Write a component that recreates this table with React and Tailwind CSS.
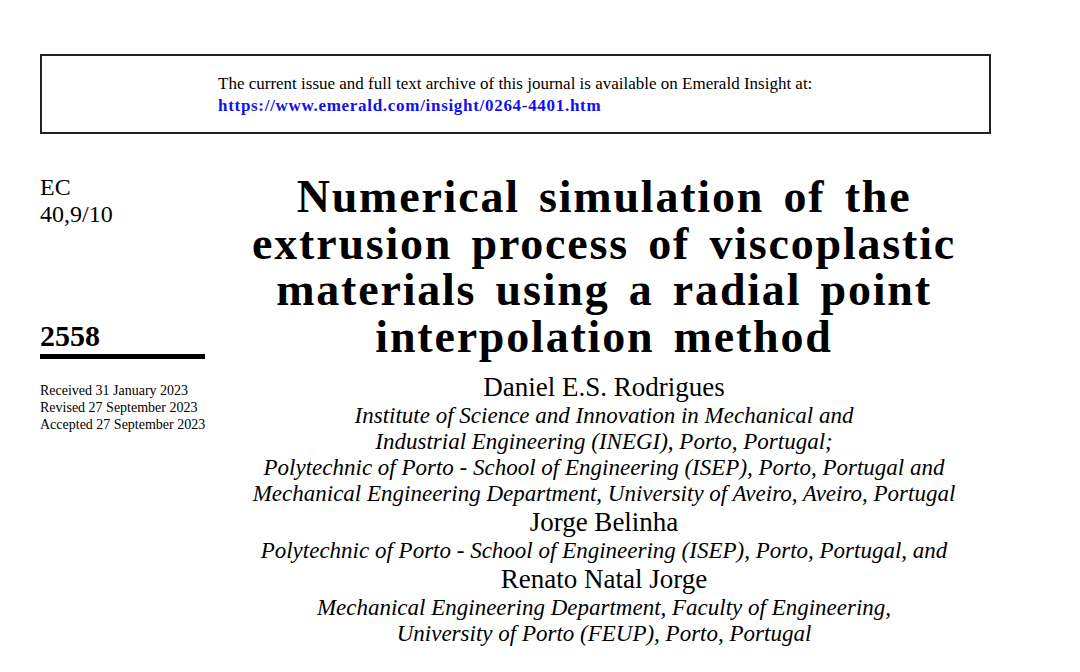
import React from 'react';

const serif = { fontFamily: '"Liberation Serif", "DejaVu Serif", serif' };

const Affil = ({ children }) => (
  <p className="italic text-[23px] leading-[26px]">{children}</p>
);

const Author = ({ children }) => (
  <p className="text-[27px] leading-[31px]">{children}</p>
);

export default function App() {
  return (
    <div className="w-[1080px] h-[672px] bg-white text-black overflow-hidden" style={serif}>
      <div className="pt-[54px] pl-[40px]">
        <div className="w-[951px] h-[80px] border-2 border-[#222] pl-[176px] pt-[17px]">
          <p className="text-[17px] leading-[22px]">
            The current issue and full text archive of this journal is available on Emerald Insight at:
          </p>
          <p className="text-[17px] leading-[22px] font-bold text-[#1010f0] tracking-[0.7px]">
            https://www.emerald.com/insight/0264-4401.htm
          </p>
        </div>

        <div className="flex">
          <div className="w-[190px] shrink-0 pt-[40px]">
            <p className="text-[24px] leading-[27px]">EC</p>
            <p className="text-[24px] leading-[27px]">40,9/10</p>
            <p className="mt-[92px] text-[30px] leading-[32px] font-bold">2558</p>
            <div className="mt-[2px] w-[165px] h-[4.5px] bg-black" />
            <div className="mt-[23px] text-[14px] leading-[17px]">
              <p>Received 31 January 2023</p>
              <p>Revised 27 September 2023</p>
              <p>Accepted 27 September 2023</p>
            </div>
          </div>

          <div className="w-[748px] shrink-0 text-center pt-[40px]">
            <h1 className="text-[46px] leading-[46.5px] font-bold tracking-[1.8px] [word-spacing:6px]">
              Numerical simulation of the<br />
              extrusion process of viscoplastic<br />
              materials using a radial point<br />
              interpolation method
            </h1>
            <div className="mt-[12px]">
              <Author>Daniel E.S. Rodrigues</Author>
              <Affil>
                Institute of Science and Innovation in Mechanical and<br />
                Industrial Engineering (INEGI), Porto, Portugal;<br />
                Polytechnic of Porto - School of Engineering (ISEP), Porto, Portugal and<br />
                Mechanical Engineering Department, University of Aveiro, Aveiro, Portugal
              </Affil>
              <Author>Jorge Belinha</Author>
              <Affil>Polytechnic of Porto - School of Engineering (ISEP), Porto, Portugal, and</Affil>
              <Author>Renato Natal Jorge</Author>
              <Affil>
                Mechanical Engineering Department, Faculty of Engineering,<br />
                University of Porto (FEUP), Porto, Portugal
              </Affil>
            </div>
          </div>
        </div>
      </div>
    </div>
  );
}
